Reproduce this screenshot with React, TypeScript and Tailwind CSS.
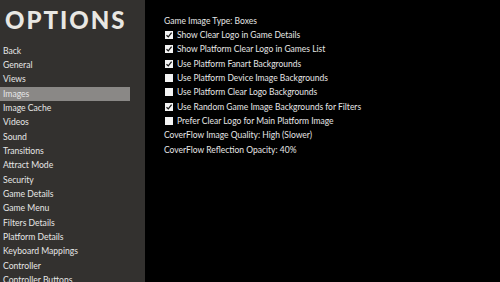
const menu = [
  "Back",
  "General",
  "Views",
  "Images",
  "Image Cache",
  "Videos",
  "Sound",
  "Transitions",
  "Attract Mode",
  "Security",
  "Game Details",
  "Game Menu",
  "Filters Details",
  "Platform Details",
  "Keyboard Mappings",
  "Controller",
  "Controller Buttons",
];

type Opt = { label: string; checked?: boolean };

const options: Opt[] = [
  { label: "Game Image Type: Boxes" },
  { label: "Show Clear Logo in Game Details", checked: true },
  { label: "Show Platform Clear Logo in Games List", checked: true },
  { label: "Use Platform Fanart Backgrounds", checked: true },
  { label: "Use Platform Device Image Backgrounds", checked: false },
  { label: "Use Platform Clear Logo Backgrounds", checked: false },
  { label: "Use Random Game Image Backgrounds for Filters", checked: true },
  { label: "Prefer Clear Logo for Main Platform Image", checked: false },
  { label: "CoverFlow Image Quality: High (Slower)" },
  { label: "CoverFlow Reflection Opacity: 40%" },
];

const Check = ({ on }: { on: boolean }) => (
  <span className="w-[8px] h-[8px] bg-[#f4f4f4] flex items-center justify-center shrink-0 ml-[1px] mr-[2px]">
    {on && (
      <svg width="8" height="8" viewBox="0 0 8 8">
        <path d="M1.5 4.2 L3.3 5.9 L6.6 1.6" fill="none" stroke="#1a1a1a" strokeWidth="1.3" />
      </svg>
    )}
  </span>
);

export default function App() {
  return (
    <div className="w-[500px] h-[282px] bg-black flex overflow-hidden font-['Lato',sans-serif] text-[#e6e6e6]">
      <aside className="w-[145px] shrink-0 bg-[#33312f] flex flex-col overflow-hidden">
        <h1 className="shrink-0 font-black text-[24px] leading-none tracking-[2px] text-[#e8e7e3] pl-[5px] pt-[8px] h-[43.65px]">
          OPTIONS
        </h1>
        <ul className="shrink-0 flex flex-col">
          {menu.map((m) => (
            <li
              key={m}
              className={`h-[14.33px] leading-[14.33px] text-[8.6px] pl-[3px] w-[130px] whitespace-nowrap shrink-0 ${
                m === "Images" ? "bg-[#8a8886]" : ""
              }`}
            >
              {m}
            </li>
          ))}
        </ul>
      </aside>
      <main className="pl-[19px] pt-[13.65px] flex flex-col">
        {options.map((o) => (
          <div key={o.label} className="h-[14.33px] leading-[14.33px] flex items-center gap-[2px] text-[8.5px] whitespace-nowrap">
            {o.checked !== undefined && <Check on={o.checked} />}
            <span>{o.label}</span>
          </div>
        ))}
      </main>
    </div>
  );
}
